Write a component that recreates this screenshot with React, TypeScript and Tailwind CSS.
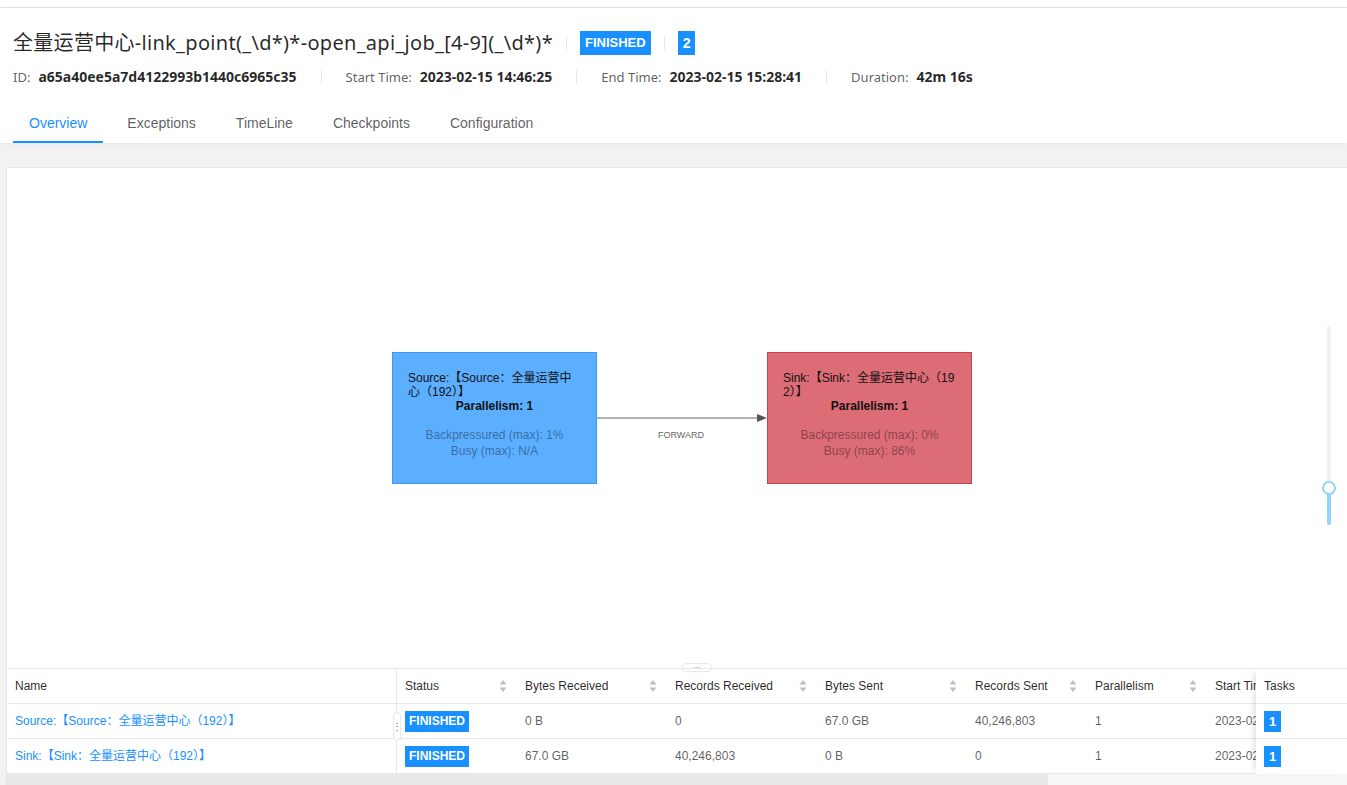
import React from "react";

const font = { fontFamily: '"Liberation Sans", "Noto Sans CJK SC", sans-serif' };
const wide = { fontFamily: '"Noto Sans", "Noto Sans CJK SC", sans-serif' };

const columns = [
  { title: "Status", w: 120 },
  { title: "Bytes Received", w: 150 },
  { title: "Records Received", w: 150 },
  { title: "Bytes Sent", w: 150 },
  { title: "Records Sent", w: 120 },
  { title: "Parallelism", w: 120 },
];

const rows = [
  { name: "Source:【Source：全量运营中心（192）】", br: "0 B", rr: "0", bs: "67.0 GB", rs: "40,246,803" },
  { name: "Sink:【Sink：全量运营中心（192）】", br: "67.0 GB", rr: "40,246,803", bs: "0 B", rs: "0" },
];

const info = [
  { label: "ID:", value: "a65a40ee5a7d4122993b1440c6965c35" },
  { label: "Start Time:", value: "2023-02-15 14:46:25" },
  { label: "End Time:", value: "2023-02-15 15:28:41" },
  { label: "Duration:", value: "42m 16s" },
];

const SortIcon = () => (
  <svg width="8" height="14" viewBox="0 0 8 14" className="shrink-0">
    <path d="M4 1 L7.5 5.5 L0.5 5.5 Z" fill="#bfbfbf" />
    <path d="M4 13 L7.5 8.5 L0.5 8.5 Z" fill="#bfbfbf" />
  </svg>
);

const Sep = () => <span className="mx-[13px] inline-block h-[14px] w-px bg-[#e8e8e8]" />;

const Node = ({ title, stats, color, border, left }: { title: string; stats: string[]; color: string; border: string; left: number }) => (
  <div
    className={`absolute top-[184px] flex h-[132px] w-[205px] flex-col border px-[15px] pt-[18px] text-[12px] leading-[14px] ${color} ${border}`}
    style={{ left }}
  >
    <div className="break-all text-[#111]">{title}</div>
    <div className="text-center font-bold text-[#111]">Parallelism: 1</div>
    <div className="mt-[14px] text-center leading-[16px] text-[rgba(0,0,0,0.4)]">
      {stats.map((s) => (
        <div key={s}>{s}</div>
      ))}
    </div>
  </div>
);

export default function App() {
  return (
    <div className="h-[785px] w-[1347px] overflow-hidden bg-[#f2f2f2] text-[rgba(0,0,0,0.65)]" style={font}>
      {/* header */}
      <div className="h-[7px] bg-white" />
      <div className="border-t border-[#e2e2e2] bg-white shadow-[0_1px_4px_rgba(0,0,0,0.04)]">
        <div className="flex items-center px-[13px] pt-[21px]">
          <h1 className="text-[20px] leading-[28px] tracking-[0.3px] text-[rgba(0,0,0,0.85)]" style={wide}>
            全量运营中心-link_point(_\d*)*-open_api_job_[4-9](_\d*)*
          </h1>
          <Sep />
          <span className="bg-[#1890ff] px-[5px] text-[13px] leading-[24px] font-bold text-white">FINISHED</span>
          <Sep />
          <span className="bg-[#1890ff] px-[5px] text-[14px] leading-[24px] font-bold text-white">2</span>
        </div>
        <div className="flex items-center px-[13px] pt-[10px] leading-[20px]" style={wide}>
          {info.map((it, i) => (
            <React.Fragment key={it.label}>
              {i > 0 && <span className="mx-6 inline-block h-[14px] w-px bg-[#e8e8e8]" />}
              <span className="text-[13px]">{it.label}</span>
              <span className="ml-2 text-[14px] font-bold text-[rgba(0,0,0,0.85)]">{it.value}</span>
            </React.Fragment>
          ))}
        </div>
        <div className="mt-[25px] flex px-[13px] text-[14px]">
          {["Overview", "Exceptions", "TimeLine", "Checkpoints", "Configuration"].map((t, i) => (
            <div
              key={t}
              className={`mr-2 border-b-2 px-4 pb-[7px] leading-[22px] ${
                i === 0 ? "border-[#1890ff] text-[#1890ff]" : "border-transparent"
              }`}
            >
              {t}
            </div>
          ))}
        </div>
      </div>

      {/* content */}
      <div className="ml-[6px] mt-[24px] border-t border-l border-[#e6e6e6] bg-white">
        <div className="relative h-[500px]">
          <Node
            title="Source:【Source：全量运营中心（192）】"
            stats={["Backpressured (max): 1%", "Busy (max): N/A"]}
            color="bg-[#5caeff]"
            border="border-[#3b98f5]"
            left={385}
          />
          <Node
            title="Sink:【Sink：全量运营中心（192）】"
            stats={["Backpressured (max): 0%", "Busy (max): 86%"]}
            color="bg-[#dc6c76]"
            border="border-[#cf3f4d]"
            left={760}
          />
          <svg className="absolute left-[590px] top-[244px]" width="170" height="12">
            <line x1="0" y1="6" x2="162" y2="6" stroke="#666" strokeWidth="1" />
            <path d="M160 2 L170 6 L160 10 Z" fill="#555" />
          </svg>
          <div className="absolute left-[651px] top-[261px] text-[9px] text-[#666]">FORWARD</div>

          {/* zoom slider */}
          <div className="absolute left-[1320px] top-[157px] h-[200px] w-[4px] rounded bg-[#f2f2f2]">
            <div className="absolute bottom-0 left-0 h-[37px] w-[4px] rounded bg-[#91d5ff]" />
            <div className="absolute left-[-5px] top-[156px] h-[14px] w-[14px] rounded-full border-2 border-[#91d5ff] bg-white" />
          </div>

          <div className="absolute left-[675px] top-[495px] flex h-[9px] w-[30px] items-center justify-center rounded-sm border border-[#e8e8e8] bg-white text-[8px] leading-none text-[#666]">
            ···
          </div>
        </div>

        {/* table */}
        <div className="relative border-t border-[#e8e8e8] text-[12px]">
          <div className="flex h-[35px] items-center border-b border-[#e8e8e8] text-[rgba(0,0,0,0.85)]">
            <div className="flex h-full w-[390px] shrink-0 items-center border-r border-[#e8e8e8] px-2">Name</div>
            {columns.map((c) => (
              <div key={c.title} className="flex h-full shrink-0 items-center justify-between px-2 pr-[10px]" style={{ width: c.w }}>
                <span>{c.title}</span>
                <SortIcon />
              </div>
            ))}
            <div className="w-[50px] shrink-0 overflow-hidden whitespace-nowrap pl-2">Start Time</div>
          </div>
          {rows.map((r) => (
            <div key={r.name} className="flex h-[35px] items-center border-b border-[#e8e8e8] last:border-b-0">
              <div className="flex h-full w-[390px] shrink-0 items-center border-r border-[#e8e8e8] px-2 text-[#1890ff]">{r.name}</div>
              <div className="flex h-full w-[120px] shrink-0 items-center px-2">
                <span className="bg-[#1890ff] px-1 text-[12px] leading-[21px] font-bold text-white">FINISHED</span>
              </div>
              <div className="w-[150px] shrink-0 px-2">{r.br}</div>
              <div className="w-[150px] shrink-0 px-2">{r.rr}</div>
              <div className="w-[150px] shrink-0 px-2">{r.bs}</div>
              <div className="w-[120px] shrink-0 px-2">{r.rs}</div>
              <div className="w-[120px] shrink-0 px-2">1</div>
              <div className="w-[50px] shrink-0 overflow-hidden whitespace-nowrap pl-2">2023-02-15 14:46:25</div>
            </div>
          ))}
          <div className="absolute left-[386px] top-[43px] flex h-[29px] w-[8px] items-center justify-center rounded-sm border border-[#e8e8e8] bg-white text-[10px] leading-none text-[#666]">
            ⋮
          </div>
          {/* fixed Tasks column */}
          <div className="absolute right-0 top-0 w-[91px] bg-white shadow-[-6px_0_6px_-4px_rgba(0,0,0,0.12)]">
            <div className="flex h-[35px] items-center border-b border-[#e8e8e8] px-2 text-[rgba(0,0,0,0.85)]">Tasks</div>
            {rows.map((r, i) => (
              <div key={r.name} className={`flex h-[35px] items-center px-2 ${i === 0 ? "border-b border-[#e8e8e8]" : ""}`}>
                <span className="bg-[#1890ff] px-[5px] text-[13px] leading-[21px] font-bold text-white">1</span>
              </div>
            ))}
          </div>
        </div>
        <div className="flex h-[12px]">
          <div className="w-[1041px] bg-[#e8e8e8]" />
          <div className="flex-1 bg-[#f7f7f7]" />
        </div>
      </div>
    </div>
  );
}
